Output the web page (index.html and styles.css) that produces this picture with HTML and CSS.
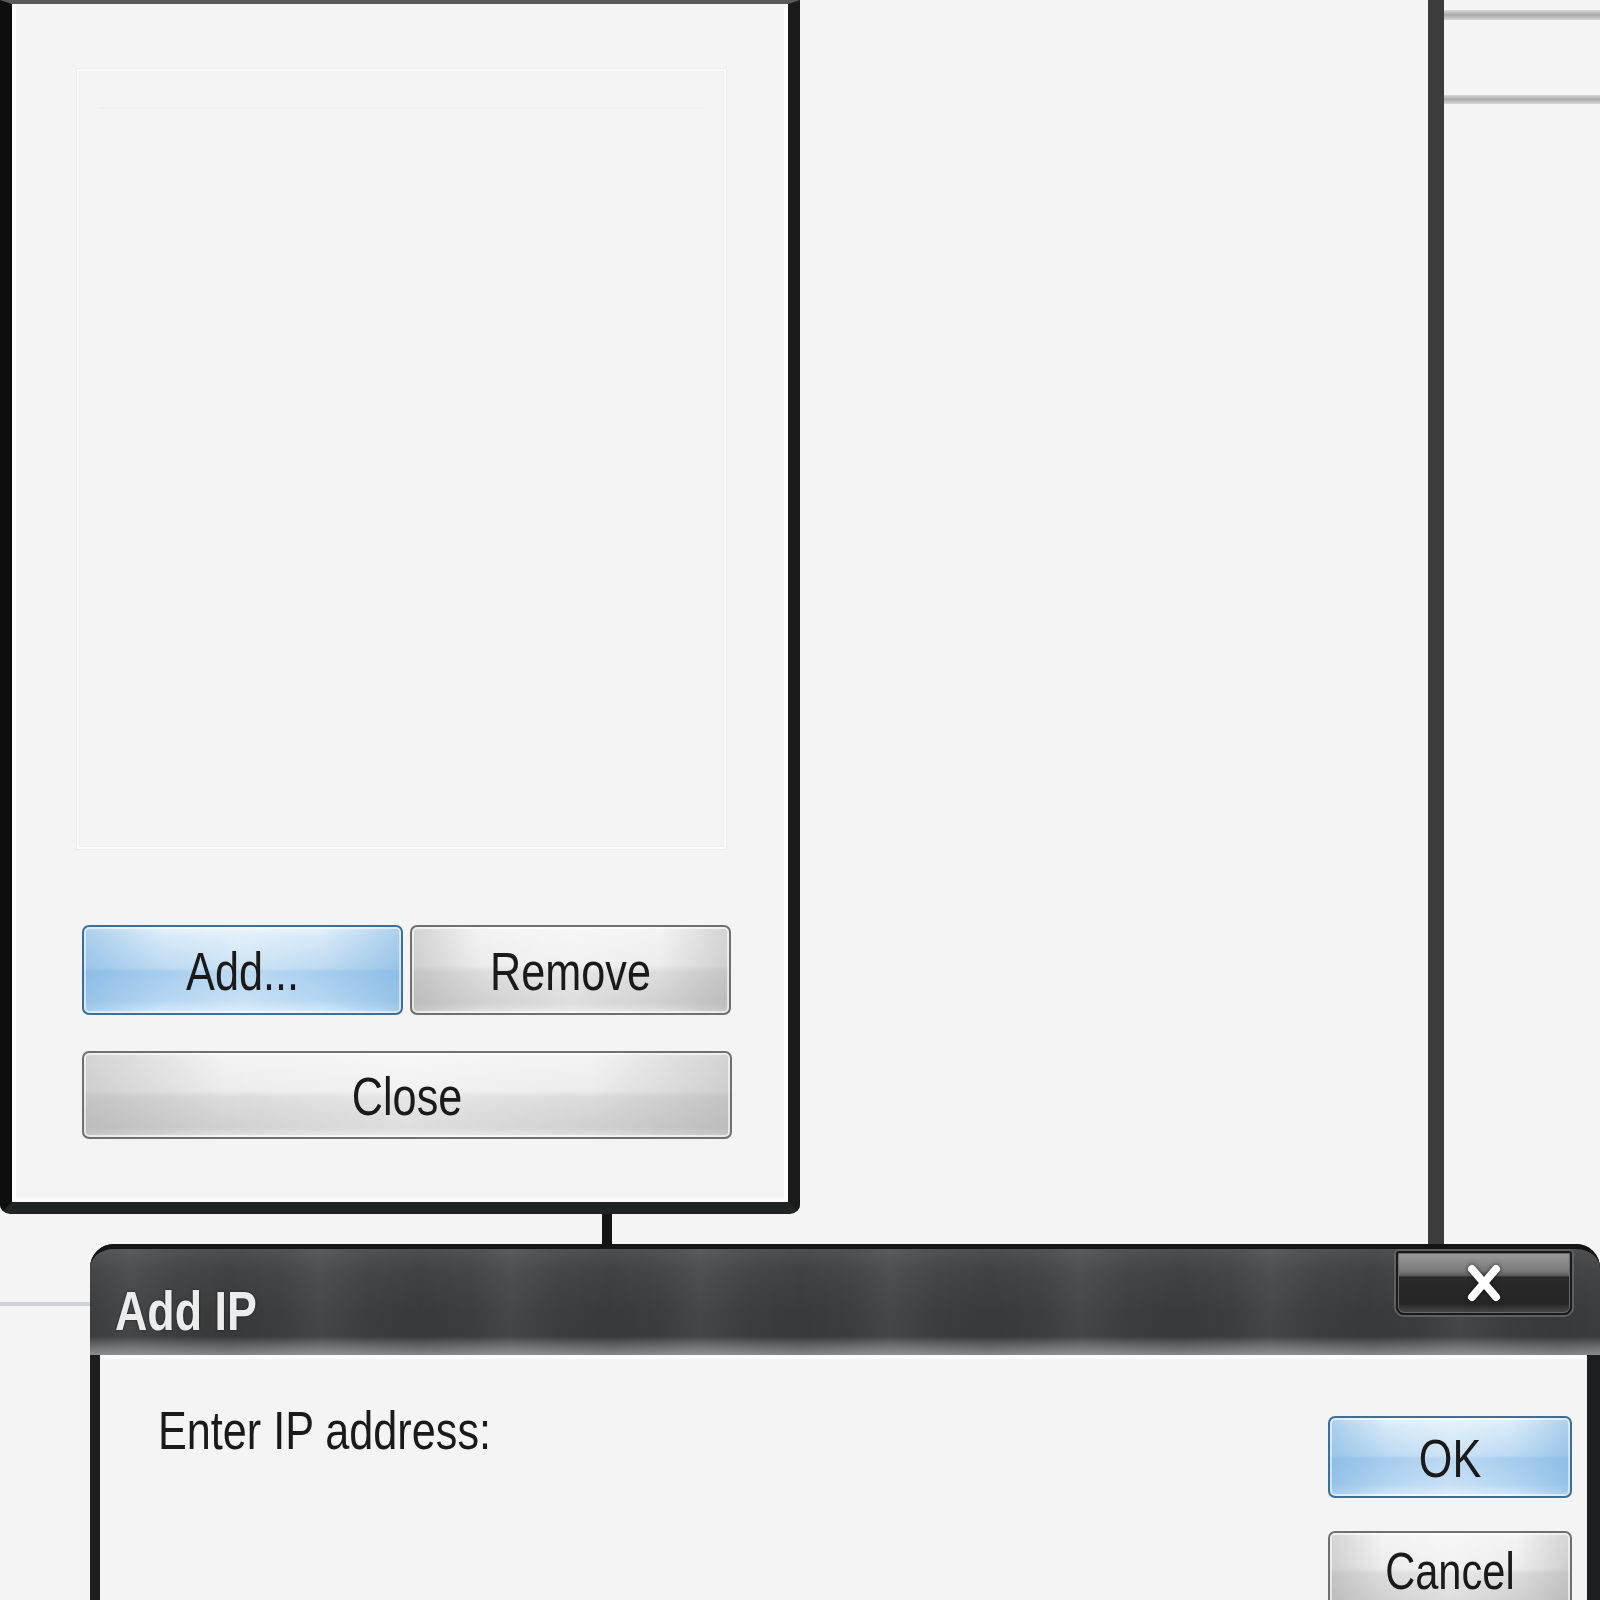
FILE: index.html
```html
<!DOCTYPE html>
<html>
<head>
<meta charset="utf-8">
<link rel="stylesheet" href="styles.css">
</head>
<body>
<div class="desktop">
  <div class="win-left">
    <div class="list-box">
      <div class="list-head"></div>
    </div>
    <div class="btn-area">
      <div class="btn-row">
        <div class="btn btn-blue btn-half"><span class="lbl">Add...</span></div>
        <div class="btn btn-gray btn-half"><span class="lbl">Remove</span></div>
      </div>
      <div class="btn btn-gray btn-full"><span class="lbl">Close</span></div>
    </div>
  </div>

  <div class="win-right">
    <div class="rline rline-1"></div>
    <div class="rline rline-2"></div>
  </div>

  <div class="connector"></div>
  <div class="faint-line"></div>

  <div class="dialog">
    <div class="titlebar">
      <span class="title">Add IP</span>
      <div class="close-btn">
        <svg class="close-x" width="44" height="40" viewBox="0 0 44 40">
          <path d="M10 6 L34 34 M34 6 L10 34" stroke="#ffffff" stroke-width="8" stroke-linecap="round" fill="none"/>
        </svg>
      </div>
    </div>
    <div class="dlg-body">
      <div class="prompt"><span class="prompt-text">Enter IP address:</span></div>
      <div class="dlg-buttons">
        <div class="btn btn-blue btn-dlg"><span class="lbl">OK</span></div>
        <div class="btn btn-gray btn-dlg btn-cancel"><span class="lbl">Cancel</span></div>
      </div>
    </div>
  </div>
</div>
</body>
</html>
```
FILE: styles.css
```css
* { box-sizing: border-box; }
html, body { margin: 0; padding: 0; }
body {
  background: #f4f4f4;
  font-family: "Liberation Sans", Arial, sans-serif;
  color: #1c1c1c;
}
.desktop {
  position: relative;
  width: 1600px;
  height: 1600px;
  overflow: hidden;
  background: #f4f4f4;
}

/* ---------- left window ---------- */
.win-left {
  position: absolute;
  left: 0;
  top: 0;
  width: 800px;
  height: 1214px;
  border-left: 12px solid #0e0e0e;
  border-right: 12px solid #1b1b1b;
  border-bottom: 12px solid #202324;
  border-top: 4px solid #5a5a5a;
  border-radius: 0 0 10px 10px;
  background: #f4f4f4;
  box-shadow: inset 4px 0 0 #ffffff, inset -4px 0 0 #ffffff, inset 0 -4px 0 #fbfbfb;
  padding: 65px 61px 0 65px;
}
.list-box {
  width: 649px;
  height: 780px;
  border: 2px solid #fbfbfb;
  box-shadow: 0 0 0 1px #ececec, inset 0 0 0 1px #efefef;
  background: #f4f4f4;
  padding: 14px 20px;
}
.list-head {
  height: 24px;
  border-bottom: 2px solid #f1f1f1;
}
.btn-area {
  margin-top: 76px;
  margin-left: 5px;
  width: 650px;
  display: flex;
  flex-direction: column;
  gap: 36px;
}
.btn-row {
  display: flex;
  gap: 7px;
}
.btn {
  display: flex;
  align-items: center;
  justify-content: center;
  border-radius: 7px;
  font-size: 54px;
  line-height: 1;
  color: #1a1a1a;
}
.lbl {
  display: inline-block;
  padding-top: 2px;
  transform: scaleX(0.8);
  transform-origin: center;
  white-space: nowrap;
}
.btn-half { width: 321px; height: 90px; }
.btn-full { width: 650px; height: 88px; }

.btn-blue {
  border: 2px solid #3d6f99;
  background:
    linear-gradient(to right, rgba(110,170,220,0.45) 0%, rgba(255,255,255,0) 25%, rgba(255,255,255,0.25) 50%, rgba(255,255,255,0) 75%, rgba(110,170,220,0.45) 100%),
    linear-gradient(to bottom, #e8f3fc 0%, #d8eaf8 10%, #bcdaf2 48%, #a6cdee 52%, #b4d6f1 85%, #d8ebfa 100%);
  box-shadow: inset 0 0 0 2px rgba(255,255,255,0.55);
}
.btn-gray {
  border: 2px solid #707070;
  background:
    linear-gradient(to right, rgba(150,150,150,0.35) 0%, rgba(255,255,255,0) 22%, rgba(255,255,255,0.3) 50%, rgba(255,255,255,0) 78%, rgba(150,150,150,0.35) 100%),
    linear-gradient(to bottom, #f4f4f4 0%, #ececec 45%, #dcdcdc 52%, #d0d0d0 88%, #e2e2e2 100%);
  box-shadow: inset 0 0 0 2px rgba(255,255,255,0.6);
}

/* ---------- right window ---------- */
.win-right {
  position: absolute;
  left: 1428px;
  top: 0;
  width: 172px;
  height: 1245px;
  border-left: 16px solid #3c3c3c;
  padding-top: 10px;
}
.rline {
  height: 10px;
  background: linear-gradient(to bottom, #d8d8d8, #a9a9a9 50%, #d8d8d8);
}
.rline-2 {
  margin-top: 75px;
  height: 9px;
}

.connector {
  position: absolute;
  left: 602px;
  top: 1214px;
  width: 10px;
  height: 32px;
  background: #151515;
}
.faint-line {
  position: absolute;
  left: 0;
  top: 1302px;
  width: 92px;
  height: 4px;
  background: #d2d2da;
}

/* ---------- dialog ---------- */
.dialog {
  position: absolute;
  left: 90px;
  top: 1244px;
  width: 1510px;
  height: 420px;
  border-radius: 24px 24px 0 0;
  background: #1c1e1f;
  padding: 0 13px 0 10px;
  display: flex;
  flex-direction: column;
}
.titlebar {
  margin: 0 -13px 0 -10px;
  height: 111px;
  border-radius: 24px 24px 0 0;
  border-top: 5px solid #141414;
  background:
    repeating-linear-gradient(to right, rgba(255,255,255,0) 0px, rgba(255,255,255,0.05) 40px, rgba(255,255,255,0) 90px, rgba(0,0,0,0.06) 140px, rgba(255,255,255,0) 190px),
    linear-gradient(to bottom, #505254 0%, #444648 20%, #3b3d3f 60%, #3a3c3e 82%, #6a6c6e 92%, #8a8c8e 100%);
  display: flex;
  justify-content: space-between;
  align-items: flex-start;
  padding: 0 28px 0 25px;
}
.title {
  display: inline-block;
  font-weight: bold;
  font-size: 56px;
  color: #ececec;
  text-shadow: 0 0 3px rgba(0,0,0,0.6);
  margin-top: 34px;
  line-height: 1;
  transform: scaleX(0.8);
  transform-origin: left center;
  white-space: nowrap;
}
.close-btn {
  margin-top: 2px;
  width: 176px;
  height: 64px;
  border: 2px solid #1a1a1a;
  border-radius: 3px 3px 8px 8px;
  box-shadow: 0 0 0 2px #5e6062, inset 0 0 0 1px #6a6a6a;
  background: linear-gradient(to bottom, #9a9a9a 0%, #7a7a7a 30%, #5a5a5a 38%, #2a2a2a 40%, #262626 85%, #4a4a4a 100%);
  display: flex;
  align-items: center;
  justify-content: center;
}
.close-x { display: block; filter: drop-shadow(0 0 2px rgba(0,0,0,0.7)); }
.dlg-body {
  flex: 1;
  background: #f4f4f4;
  border-top: 4px solid #fbfbfb;
  display: flex;
  justify-content: space-between;
  align-items: flex-start;
  padding: 44px 15px 0 58px;
}
.prompt {
  font-size: 54px;
  line-height: 1;
  color: #1a1a1a;
}
.prompt-text {
  display: inline-block;
  transform: scaleX(0.8);
  transform-origin: left center;
  white-space: nowrap;
}
.dlg-buttons {
  margin-top: 13px;
  display: flex;
  flex-direction: column;
  gap: 33px;
}
.btn-dlg { width: 244px; height: 82px; }
.btn-cancel { align-items: flex-start; padding-top: 12px; }
.btn-cancel .lbl { font-size: 52px; padding-top: 0; }
```
